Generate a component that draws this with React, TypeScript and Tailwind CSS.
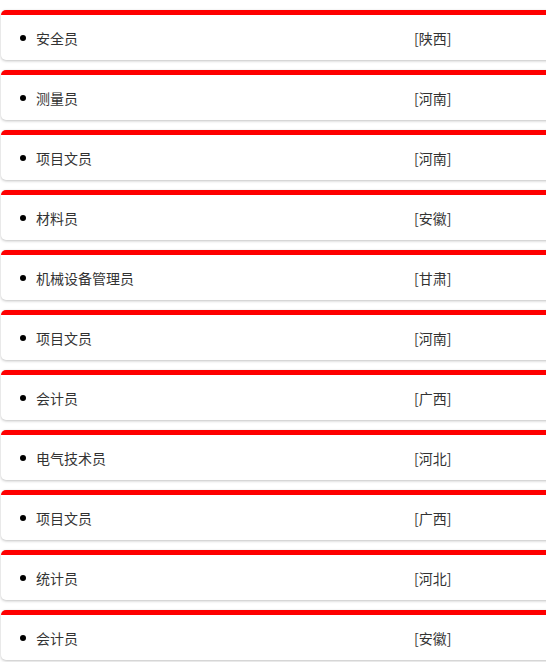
import React from "react";

const rows: [string, string][] = [
  ["安全员", "[陕西]"],
  ["测量员", "[河南]"],
  ["项目文员", "[河南]"],
  ["材料员", "[安徽]"],
  ["机械设备管理员", "[甘肃]"],
  ["项目文员", "[河南]"],
  ["会计员", "[广西]"],
  ["电气技术员", "[河北]"],
  ["项目文员", "[广西]"],
  ["统计员", "[河北]"],
  ["会计员", "[安徽]"],
];

export default function App() {
  return (
    <div
      className="w-[546px] h-[662px] overflow-hidden bg-white text-[14px] text-[#333]"
      style={{ fontFamily: '"Noto Sans CJK SC", "Liberation Sans", sans-serif' }}
    >
      <ul className="flex flex-col">
        {rows.map(([name, loc], i) => (
          <li
            key={i}
            className="mt-[10px] ml-[1px] w-[560px] h-[50px] box-border border-t-[5px] border-[#ff0000] rounded-[5px] bg-white shadow-[0_1px_3px_rgba(0,0,0,0.25)] flex items-center pt-[0px]"
          >
            <span className="ml-[19px] w-[6px] h-[6px] rounded-full bg-black shrink-0" />
            <span className="ml-[10px] w-[378px] shrink-0 leading-none">{name}</span>
            <span className="leading-none">{loc}</span>
          </li>
        ))}
      </ul>
    </div>
  );
}
